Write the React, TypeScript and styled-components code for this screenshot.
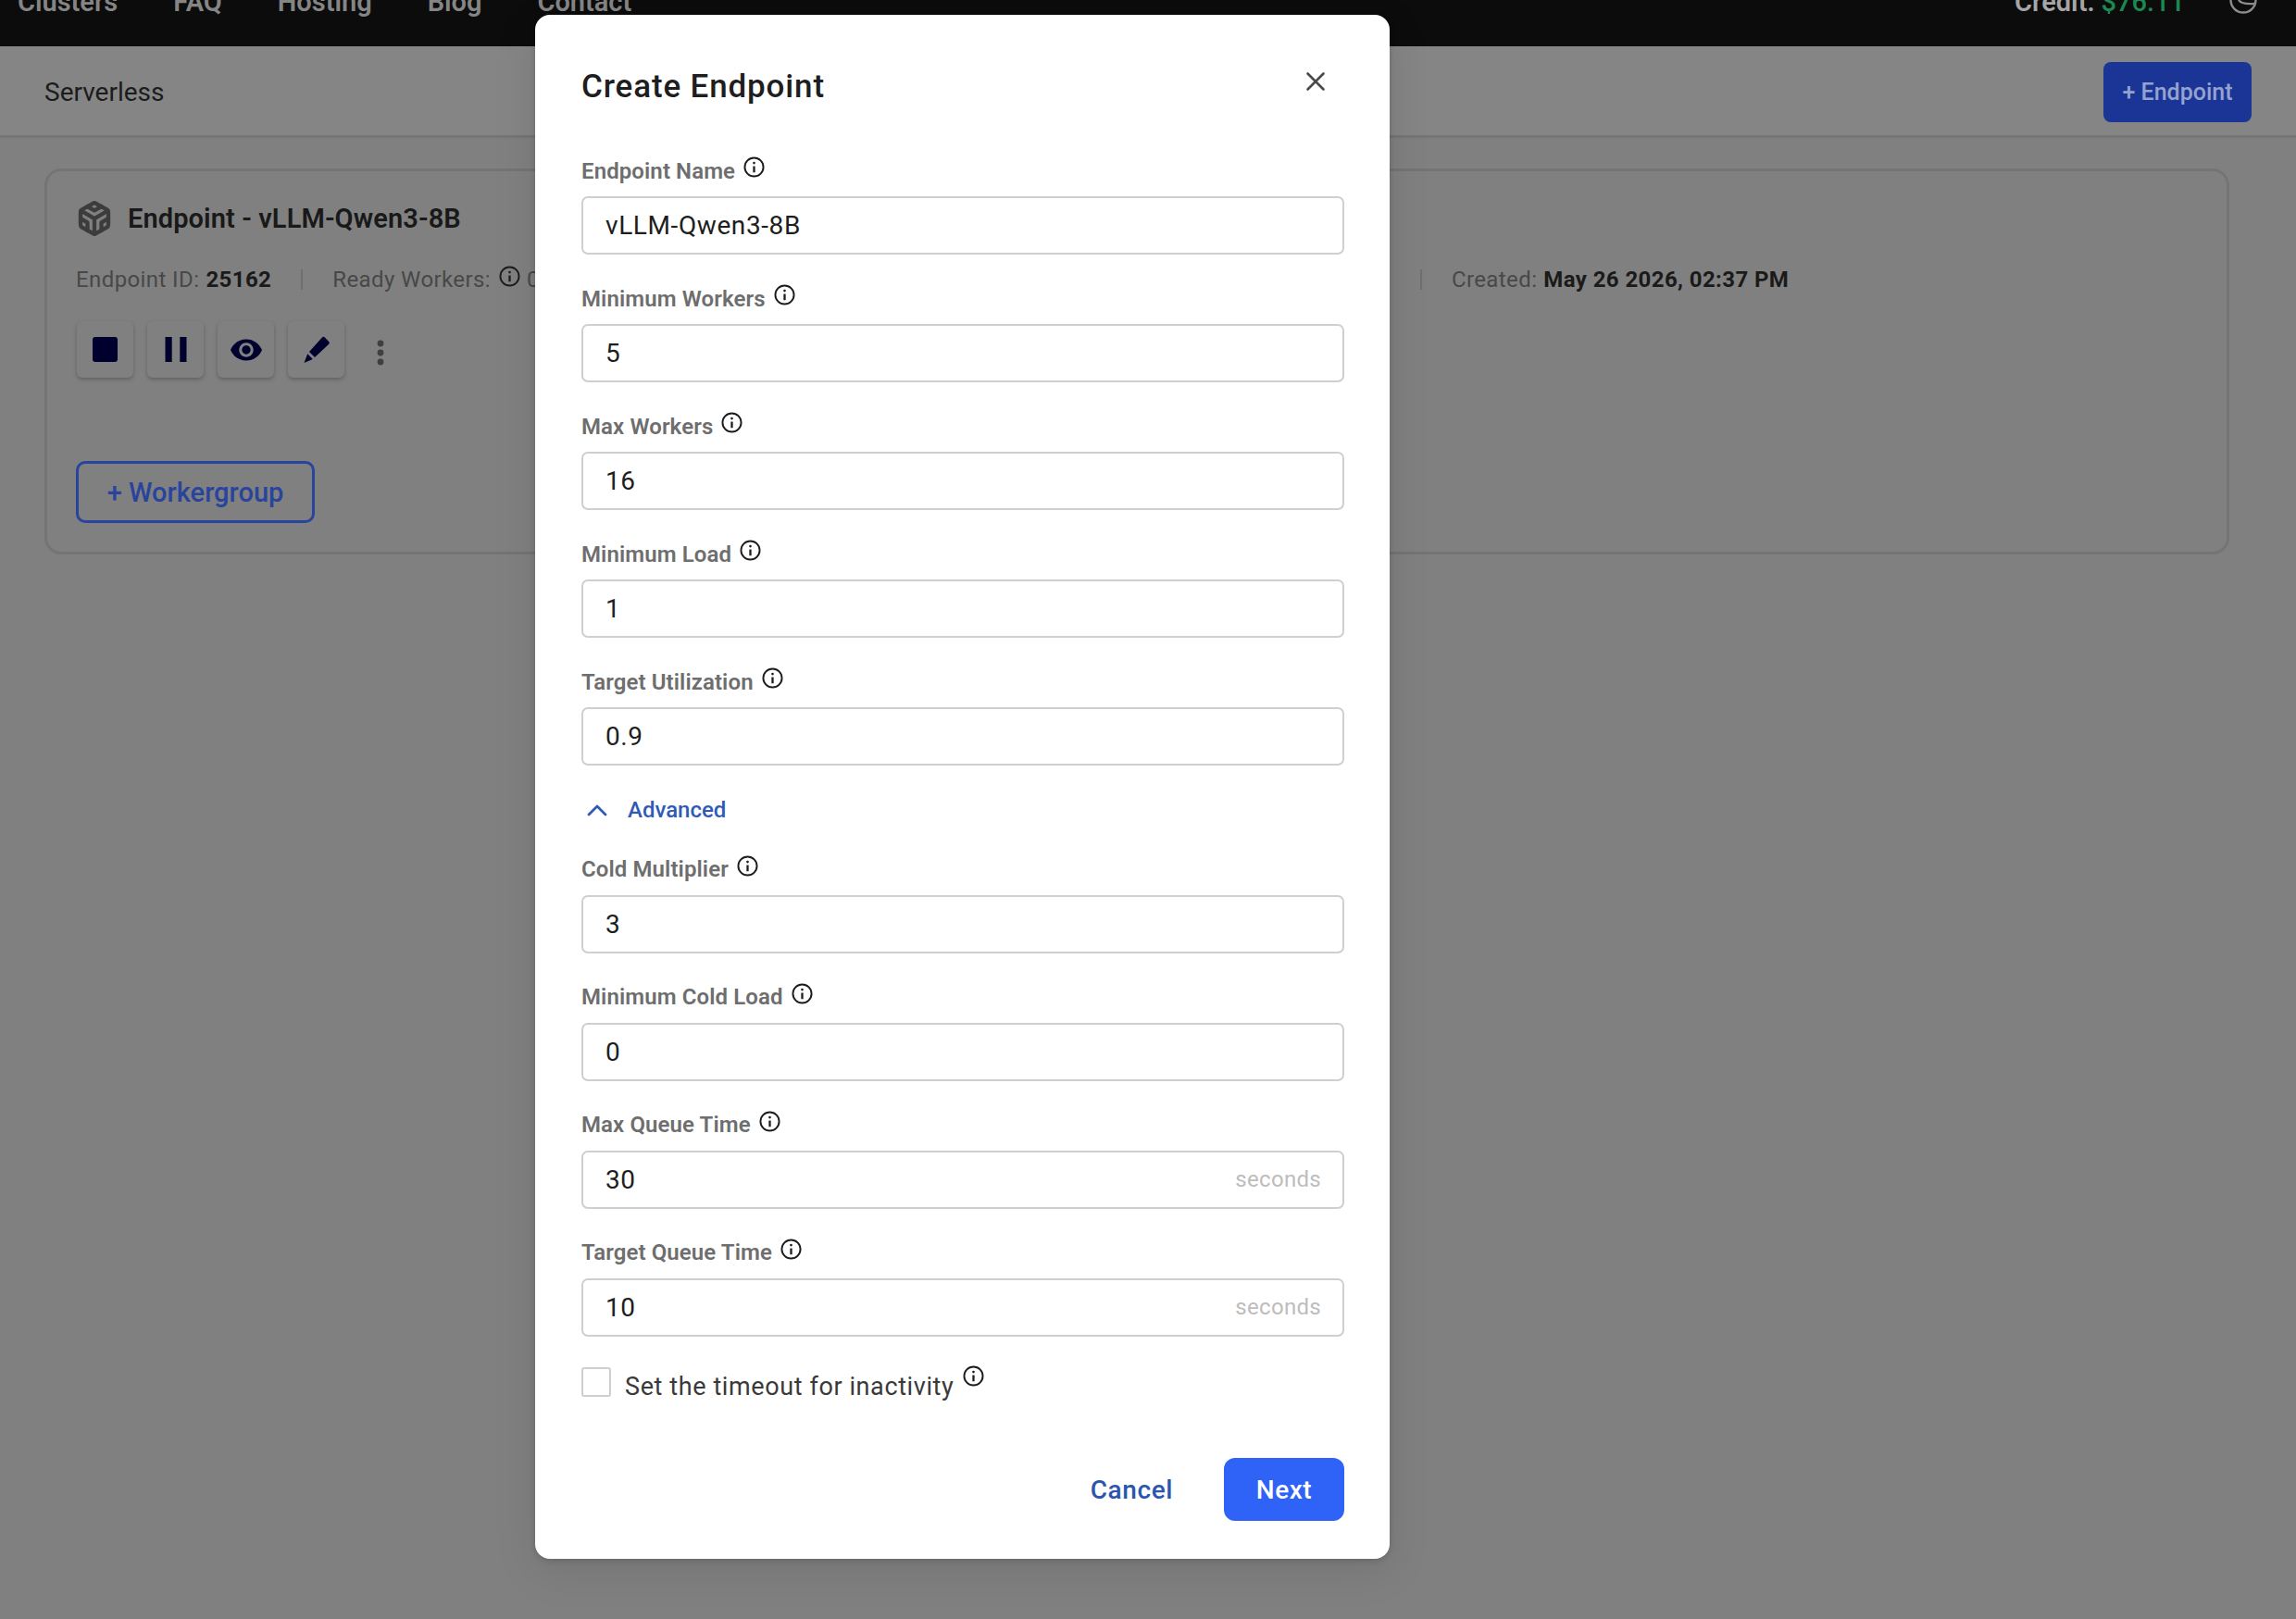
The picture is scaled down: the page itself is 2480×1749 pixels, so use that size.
import React from "react";
import styled, { createGlobalStyle } from "styled-components";
import { FiCodesandbox } from "react-icons/fi";

const Global = createGlobalStyle`
  html, body { margin: 0; padding: 0; background: #808080; }
  * { box-sizing: border-box; }
  body { font-family: Roboto, "Liberation Sans", sans-serif; }
`;

const Page = styled.div`
  position: relative;
  width: 2480px;
  height: 1749px;
  overflow: hidden;
  background: #808080;
`;

const TopBar = styled.header`
  height: 50px;
  background: #0c0c0c;
  overflow: hidden;
  display: flex;
  justify-content: space-between;
  align-items: flex-end;
  padding: 0 42px 33px 19px;
`;

const Nav = styled.nav`
  display: flex;
  gap: 60px;
`;

const NavLink = styled.span`
  font-size: 29px;
  line-height: 30px;
  font-weight: 600;
  color: #858585;
`;

const Account = styled.div`
  display: flex;
  align-items: center;
  gap: 48px;
`;

const Credit = styled.span`
  font-size: 29px;
  line-height: 30px;
  font-weight: 600;
  color: #a6a6a6;
`;

const Money = styled.span`
  color: #1c8a50;
  font-weight: 500;
`;

const Avatar = styled.span`
  display: inline-flex;
  margin-top: -5px;
  color: #8c8c8c;
`;

const SubHeader = styled.div`
  height: 99px;
  background: #858585;
  border-bottom: 3px solid #757575;
  display: flex;
  justify-content: space-between;
  align-items: center;
  padding: 2px 48px 0;
`;

const PageTitle = styled.h1`
  margin: 0;
  font-size: 28px;
  font-weight: 400;
  color: #1c1c1c;
`;

const PrimaryDim = styled.div`
  width: 160px;
  height: 65px;
  border-radius: 8px;
  background: #1a3596;
  color: #95a2cf;
  font-size: 25px;
  font-weight: 500;
  display: flex;
  align-items: center;
  justify-content: center;
`;

const Content = styled.main`
  padding: 33px 72px 0 48px;
`;

const Card = styled.section`
  height: 417px;
  border: 3px solid #747474;
  border-radius: 18px;
  padding: 31px 31px 0;
`;

const CardHead = styled.div`
  display: flex;
  align-items: center;
  gap: 15px;
  height: 40px;
  color: #3c3c3c;
`;

const CardTitle = styled.h2`
  margin: 0 0 0 1px;
  font-size: 29px;
  font-weight: 600;
  color: #191919;
  letter-spacing: 0.1px;
`;

const Meta = styled.div`
  display: flex;
  align-items: center;
  margin-top: 27.5px;
  height: 36px;
  font-size: 24px;
  color: #484848;
  letter-spacing: 0.4px;
`;

const Strong = styled.b`
  font-weight: 700;
  color: #1a1a1a;
  margin-left: 7px;
  letter-spacing: 0.4px;
`;

const Sep = styled.i`
  width: 2px;
  height: 22px;
  background: #6f6f6f;
  margin: 0 32px;
`;

const MetaSpacer = styled.span`
  flex: 0 0 919px;
`;

const MetaIcon = styled.span`
  display: inline-flex;
  margin: -6px 7px 0 9px;
  color: #1c1c1c;
`;

const Actions = styled.div`
  display: flex;
  align-items: center;
  gap: 15px;
  margin: 27.5px 0 0 1px;
`;

const ActionButton = styled.div`
  width: 61px;
  height: 61px;
  border-radius: 6px;
  background: #808080;
  box-shadow: 0 2px 4px rgba(0, 0, 0, 0.25);
  display: flex;
  align-items: center;
  justify-content: center;
`;

const Kebab = styled.div`
  margin-left: 20px;
  margin-top: 7px;
  display: flex;
  color: #3f3f3f;
`;

const OutlineButton = styled.div`
  margin-top: 90px;
  width: 258px;
  height: 67px;
  border: 3px solid #28449c;
  border-radius: 10px;
  color: #28449c;
  font-size: 29px;
  font-weight: 500;
  display: flex;
  align-items: center;
  justify-content: center;
`;

const Modal = styled.div`
  position: absolute;
  top: 16px;
  left: 578px;
  width: 923px;
  height: 1668px;
  background: #fff;
  border-radius: 16px;
  box-shadow: 0 12px 48px rgba(0, 0, 0, 0.1), 0 2px 6px rgba(0, 0, 0, 0.15);
  padding: 50px 49px 0 50px;
`;

const ModalHead = styled.div`
  display: flex;
  justify-content: space-between;
  align-items: center;
  height: 52px;
  margin-bottom: 49px;
`;

const ModalTitle = styled.h2`
  margin: 3px 0 0;
  font-size: 35px;
  font-weight: 500;
  letter-spacing: 0.85px;
  color: #1e1e1e;
`;

const Close = styled.div`
  display: flex;
  margin-right: 20px;
  margin-top: -8px;
  color: #4a4a4a;
`;

const Field = styled.div`
  display: flex;
  flex-direction: column;
  height: 138px;
`;

const LabelRow = styled.div`
  display: flex;
  align-items: center;
  gap: 9px;
  height: 35px;
  margin-bottom: 10px;
`;

const Label = styled.label`
  font-size: 24px;
  font-weight: 600;
  letter-spacing: 0.1px;
  color: #6e6e6e;
`;

const InfoWrap = styled.span`
  display: inline-flex;
  margin-top: -8px;
  color: #1c1c1c;
`;

const InputBox = styled.div`
  height: 63px;
  border: 2px solid #cfcfcf;
  border-radius: 7px;
  display: flex;
  justify-content: space-between;
  align-items: center;
  padding: 0 23px 0 24px;
`;

const Value = styled.span`
  font-size: 28px;
  color: #1e1e1e;
  letter-spacing: 0.6px;
`;

const Suffix = styled.span`
  font-size: 24px;
  color: #bdbdbd;
  letter-spacing: 0.3px;
`;

const Advanced = styled.div`
  display: flex;
  align-items: center;
  gap: 22px;
  height: 40px;
  margin: -2px 0 26.5px 6px;
  color: #2f5bb7;
  font-size: 24px;
  font-weight: 500;
`;

const CheckRow = styled.div`
  display: flex;
  align-items: center;
  gap: 15px;
  height: 36px;
  margin-top: 1px;
`;

const CheckBox = styled.span`
  width: 32px;
  height: 32px;
  border: 2px solid #cfcfcf;
  border-radius: 3px;
`;

const CheckLabel = styled.span`
  font-size: 27px;
  color: #3a3a3a;
  letter-spacing: 0.6px;
  margin-top: 10px;
`;

const CheckInfo = styled(InfoWrap)`
  margin: -12px 0 0 -5px;
`;

const Footer = styled.div`
  display: flex;
  justify-content: flex-end;
  align-items: center;
  gap: 55px;
  margin-top: 64.5px;
`;

const CancelButton = styled.div`
  font-size: 28px;
  font-weight: 500;
  color: #2a56b0;
  letter-spacing: 0.6px;
`;

const NextButton = styled.div`
  width: 130px;
  height: 68px;
  border-radius: 12px;
  background: #2f62f7;
  color: #fff;
  font-size: 28px;
  font-weight: 500;
  letter-spacing: 0.5px;
  display: flex;
  align-items: center;
  justify-content: center;
`;

const InfoIcon = ({ size = 23 }: { size?: number }) => (
  <svg width={size} height={size} viewBox="0 0 24 24" fill="none" stroke="currentColor" strokeWidth={2}>
    <circle cx="12" cy="12" r="10.5" />
    <path d="M12 11v7" strokeWidth={2.4} />
    <circle cx="12" cy="7.4" r="1.4" fill="currentColor" stroke="none" />
  </svg>
);

const Fill = "#00002e";

const StopIcon = () => (
  <svg width="27" height="27" viewBox="0 0 27 27">
    <rect width="27" height="27" rx="3" fill={Fill} />
  </svg>
);
const PauseIcon = () => (
  <svg width="24" height="27" viewBox="0 0 24 27">
    <rect x="0.5" width="7.2" height="27" fill={Fill} />
    <rect x="16.3" width="7.2" height="27" fill={Fill} />
  </svg>
);
const EyeIcon = () => (
  <svg width="34" height="34" viewBox="1 1 22 22">
    <path
      fill={Fill}
      d="M12 4.5C7 4.5 2.73 7.61 1 12c1.73 4.39 6 7.5 11 7.5s9.27-3.11 11-7.5c-1.73-4.39-6-7.5-11-7.5zM12 17c-2.76 0-5-2.24-5-5s2.24-5 5-5 5 2.24 5 5-2.24 5-5 5zm0-8c-1.66 0-3 1.34-3 3s1.34 3 3 3 3-1.34 3-3-1.34-3-3-3z"
    />
  </svg>
);
const PencilIcon = () => (
  <svg width="30" height="30" viewBox="0 0 30 30">
    <path fill={Fill} d="M21 1.5 a2 2 0 0 1 2.8 0 l4.4 4.4 a2 2 0 0 1 0 2.8 L13 23 L7 17 Z" />
    <path fill={Fill} d="M5.2 19.2 L10.8 25 L1.5 29 Z" />
  </svg>
);
const DotsIcon = () => (
  <svg width="8" height="28" viewBox="0 0 8 28" fill="currentColor">
    <circle cx="4" cy="4" r="3.4" />
    <circle cx="4" cy="14" r="3.4" />
    <circle cx="4" cy="24" r="3.4" />
  </svg>
);
const CloseIcon = () => (
  <svg width="22" height="22" viewBox="0 0 22 22" stroke="currentColor" strokeWidth="2.6" strokeLinecap="round">
    <path d="M2.5 2.5 L19.5 19.5 M19.5 2.5 L2.5 19.5" />
  </svg>
);
const ChevronUp = () => (
  <svg width="22" height="14" viewBox="0 0 22 14" fill="none" stroke="#2f5bb7" strokeWidth="2.8" strokeLinecap="round" strokeLinejoin="round">
    <path d="M2 12 L11 3 L20 12" />
  </svg>
);
const AvatarIcon = () => (
  <svg width="30" height="30" viewBox="0 0 30 30" fill="none" stroke="currentColor" strokeWidth="2.4">
    <circle cx="15" cy="15" r="13.5" />
    <path d="M10 15 q3 5 17 4" />
  </svg>
);

const basicFields = [
  { label: "Endpoint Name", value: "vLLM-Qwen3-8B" },
  { label: "Minimum Workers", value: "5" },
  { label: "Max Workers", value: "16" },
  { label: "Minimum Load", value: "1" },
  { label: "Target Utilization", value: "0.9" },
];

const advancedFields = [
  { label: "Cold Multiplier", value: "3" },
  { label: "Minimum Cold Load", value: "0" },
  { label: "Max Queue Time", value: "30", suffix: "seconds" },
  { label: "Target Queue Time", value: "10", suffix: "seconds" },
];

type FieldData = { label: string; value: string; suffix?: string };

const FormField = ({ label, value, suffix }: FieldData) => (
  <Field>
    <LabelRow>
      <Label>{label}</Label>
      <InfoWrap>
        <InfoIcon />
      </InfoWrap>
    </LabelRow>
    <InputBox>
      <Value>{value}</Value>
      {suffix && <Suffix>{suffix}</Suffix>}
    </InputBox>
  </Field>
);

export default function App() {
  return (
    <Page>
      <Global />
      <TopBar>
        <Nav>
          {["Clusters", "FAQ", "Hosting", "Blog", "Contact"].map((n) => (
            <NavLink key={n}>{n}</NavLink>
          ))}
        </Nav>
        <Account>
          <Credit>
            Credit: <Money>$76.11</Money>
          </Credit>
          <Avatar>
            <AvatarIcon />
          </Avatar>
        </Account>
      </TopBar>
      <SubHeader>
        <PageTitle>Serverless</PageTitle>
        <PrimaryDim>+ Endpoint</PrimaryDim>
      </SubHeader>
      <Content>
        <Card>
          <CardHead>
            <FiCodesandbox size={40} strokeWidth={2.6} />
            <CardTitle>Endpoint - vLLM-Qwen3-8B</CardTitle>
          </CardHead>
          <Meta>
            Endpoint ID:<Strong>25162</Strong>
            <Sep />
            Ready Workers:
            <MetaIcon>
              <InfoIcon />
            </MetaIcon>
            0
            <MetaSpacer />
            <Sep />
            Created:<Strong>May 26 2026, 02:37 PM</Strong>
          </Meta>
          <Actions>
            <ActionButton>
              <StopIcon />
            </ActionButton>
            <ActionButton>
              <PauseIcon />
            </ActionButton>
            <ActionButton>
              <EyeIcon />
            </ActionButton>
            <ActionButton>
              <PencilIcon />
            </ActionButton>
            <Kebab>
              <DotsIcon />
            </Kebab>
          </Actions>
          <OutlineButton>+ Workergroup</OutlineButton>
        </Card>
      </Content>
      <Modal>
        <ModalHead>
          <ModalTitle>Create Endpoint</ModalTitle>
          <Close>
            <CloseIcon />
          </Close>
        </ModalHead>
        {basicFields.map((f) => (
          <FormField key={f.label} {...f} />
        ))}
        <Advanced>
          <ChevronUp />
          Advanced
        </Advanced>
        {advancedFields.map((f) => (
          <FormField key={f.label} {...f} />
        ))}
        <CheckRow>
          <CheckBox />
          <CheckLabel>Set the timeout for inactivity</CheckLabel>
          <CheckInfo>
            <InfoIcon />
          </CheckInfo>
        </CheckRow>
        <Footer>
          <CancelButton>Cancel</CancelButton>
          <NextButton>Next</NextButton>
        </Footer>
      </Modal>
    </Page>
  );
}
